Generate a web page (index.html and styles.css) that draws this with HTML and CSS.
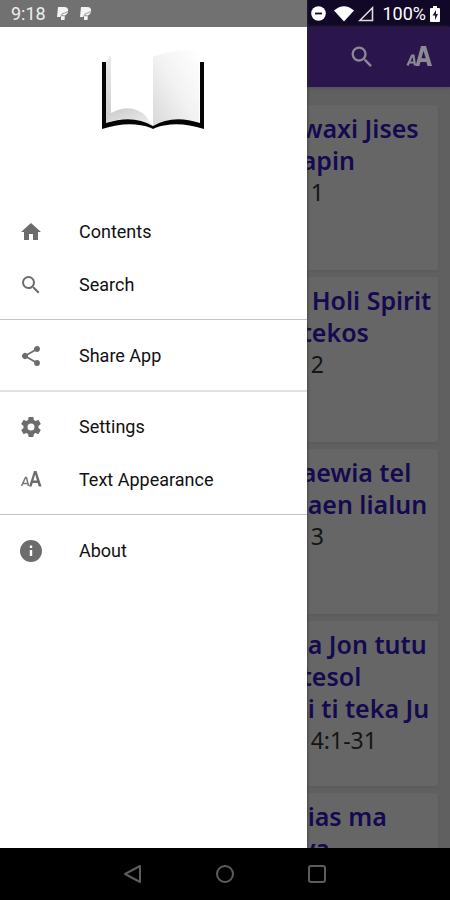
FILE: index.html
```html
<!DOCTYPE html>
<html lang="en">
<head>
<meta charset="utf-8">
<meta name="viewport" content="width=device-width, initial-scale=1">
<title>Contents</title>
<link rel="stylesheet" href="styles.css">
</head>
<body>
<div class="screen">
  <header class="status">
    <div class="status-left">
      <span>9:18</span>
      <svg width="13" height="15" viewBox="0 0 13 15"><path d="M2 1h6q5 0 4 5-1 3-3 3.500L8.500 14H5v-3H1z" fill="#f4f4f4"/><path d="M4.500 11q1-4 4-4 2.500 0 3-2M6 9.500l3 .5" stroke="#999" fill="none"/></svg>
      <svg width="13" height="15" viewBox="0 0 13 15"><path d="M2 1h6q5 0 4 5-1 3-3 3.500L8.500 14H5v-3H1z" fill="#f4f4f4"/><path d="M4.500 11q1-4 4-4 2.500 0 3-2M6 9.500l3 .5" stroke="#999" fill="none"/></svg>
    </div>
    <div class="status-right">
      <svg width="15" height="15" viewBox="0 0 15 15"><circle cx="7.500" cy="7.500" r="7.300" fill="#fff"/><path d="M4 7.500h7" stroke="#100826" stroke-width="1.800"/></svg>
      <svg class="wifi" width="20" height="16" viewBox="0 0 20 16"><path d="M0 4.500Q10-4 20 4.500L10 15.500z" fill="#fff"/></svg>
      <svg width="16" height="16" viewBox="0 0 16 16"><path d="M14.500 1.800v12.700H1.800z" fill="none" stroke="#ddd" stroke-width="1.600"/></svg>
      <span class="battery">100%</span>
      <svg width="10" height="16" viewBox="0 0 10 16"><path d="M3 0h4v2h2q1 0 1 1v12q0 1-1 1H1q-1 0-1-1V3q0-1 1-1h2z" fill="#fff"/><path d="M6 4 2.500 9.500H5V14l3-6H6z" fill="#201838"/></svg>
    </div>
  </header>

  <main class="page">
    <div class="appbar">
      <button aria-label="Search"><svg width="28" height="28" viewBox="0 0 24 24"><path d="M15.500 14h-.790l-.280-.270A6.470 6.470 0 0 0 16 9.500 6.500 6.500 0 1 0 9.500 16c1.610 0 3.090-.590 4.230-1.570l.270.280v.790l5 4.990L20.490 19zM9.500 14A4.500 4.500 0 1 1 9.500 5a4.500 4.500 0 0 1 0 9z"/></svg></button>
      <button aria-label="Text Appearance"><svg width="26" height="22" viewBox="0 0 26 22"><path d="M1.500 19.500 6 9.500h1.500L9 19.500M3 16.500h5.500" fill="none" stroke="#8c8894" stroke-width="2.200"/><path d="M9.500 20 15 0h5l6 20h-4.500L20.500 16h-6l-1.200 4zM15.500 12.300h4.200L17.500 5z"/></svg></button>
    </div>
    <div class="cards">
      <article class="card"><h2><span>waxi Jises</span><span>apin</span></h2><p>1</p></article>
      <article class="card"><h2><span class="next">Holi Spirit</span><span>tekos</span></h2><p>2</p></article>
      <article class="card"><h2><span>aewia tel</span><span class="word">aen lialun</span></h2><p>3</p></article>
      <article class="card"><h2><span class="word">a Jon tutu</span><span>tesol</span><span class="word">i ti teka Ju</span></h2><p>4:1-31</p></article>
      <article class="card"><h2><span class="word">ias ma</span><span>va</span></h2></article>
    </div>
  </main>

  <aside class="drawer">
    <div class="cover">
      <svg width="104" height="80" viewBox="0 0 104 80">
        <defs>
          <linearGradient id="right" x1="0" y1="1" x2="1" y2="0"><stop offset="0" stop-color="#d8d8d8"/><stop offset=".5" stop-color="#f2f2f2"/><stop offset="1" stop-color="#fff"/></linearGradient>
          <linearGradient id="curl" x1="0" y1="0" x2="1" y2="1"><stop offset="0" stop-color="#c8c8c8"/><stop offset="1" stop-color="#f2f2f2"/></linearGradient>
          <linearGradient id="edge" x1="0" y1="0" x2="0" y2="1"><stop offset="0" stop-color="#ececec"/><stop offset="1" stop-color="#ccc"/></linearGradient>
        </defs>
        <path d="M5 11 10 5v60l-5 8z" fill="url(#edge)"/>
        <path d="M5 73 10 63Q30 52 45 66L52 77Q28 64 5 73z" fill="url(#curl)"/>
        <path d="M52 7Q73-2 98 1V73Q73 67 52 76z" fill="url(#right)"/>
        <path d="M1 12h4v61q27-9 47 3 20-12 47-3V12h4v67q-28-9-49-1l-2 1-2-1Q29 70 1 79z" fill="#050505"/>
      </svg>
    </div>
    <nav>
      <ul>
        <li><a href="#contents"><svg viewBox="0 0 24 24"><path d="M10 20v-6h4v6h5v-8h3L12 3 2 12h3v8z"/></svg>Contents</a></li>
        <li><a href="#search"><svg viewBox="0 0 24 24"><path d="M15.500 14h-.790l-.280-.270A6.470 6.470 0 0 0 16 9.500 6.500 6.500 0 1 0 9.500 16c1.610 0 3.090-.590 4.230-1.570l.270.280v.790l5 4.990L20.490 19zM9.500 14A4.500 4.500 0 1 1 9.500 5a4.500 4.500 0 0 1 0 9z"/></svg>Search</a></li>
      </ul>
      <ul>
        <li><a href="#share"><svg viewBox="0 0 24 24"><path d="M18 16.080c-.760 0-1.440.300-1.960.770L8.910 12.700c.050-.230.090-.460.090-.700s-.040-.470-.090-.700l7.050-4.110A2.990 2.990 0 1 0 15 5c0 .240.040.470.090.700L8.040 9.810A2.990 2.990 0 1 0 8.040 14.190l7.120 4.160c-.050.210-.080.430-.080.650A2.920 2.920 0 1 0 18 16.080z"/></svg>Share App</a></li>
      </ul>
      <ul class="settings">
        <li><a href="#settings"><svg viewBox="0 0 24 24"><path d="M19.430 12.980c.040-.320.070-.640.070-.980s-.030-.660-.070-.980l2.110-1.650c.190-.150.240-.420.120-.640l-2-3.460c-.120-.220-.390-.300-.610-.220l-2.490 1c-.520-.400-1.080-.730-1.690-.980l-.380-2.650A.488.488 0 0 0 14 2h-4c-.250 0-.460.180-.490.420l-.380 2.650c-.610.250-1.170.590-1.690.980l-2.490-1c-.230-.090-.490 0-.610.220l-2 3.460c-.130.220-.070.490.120.640l2.110 1.650c-.040.320-.070.650-.070.980s.030.660.070.980l-2.110 1.650c-.190.150-.240.420-.120.640l2 3.460c.120.220.390.300.610.220l2.490-1c.520.400 1.080.730 1.690.980l.380 2.650c.030.240.240.420.490.420h4c.250 0 .460-.180.490-.420l.380-2.650c.610-.250 1.170-.590 1.690-.980l2.490 1c.230.090.490 0 .610-.220l2-3.460c.120-.220.070-.490-.120-.640zM12 15.500a3.500 3.500 0 1 1 0-7 3.500 3.500 0 0 1 0 7z"/></svg>Settings</a></li>
        <li><a href="#appearance"><svg viewBox="0 0 24 24"><path d="M2.500 18 6.500 9.500h1L9.500 18M4 15.500h4.500" fill="none" stroke="#777" stroke-width="1.500"/><path d="M10 18.500 15 3h2.500l5 15.500h-2.800L18.700 15h-5l-1.100 3.500zM14.400 12.600H18L16.200 6.500z"/></svg>Text Appearance</a></li>
      </ul>
      <ul>
        <li><a href="#about"><svg viewBox="0 0 24 24"><path d="M12 1a11 11 0 1 0 0 22 11 11 0 0 0 0-22zm1.200 16h-2.400v-6h2.400zm0-8h-2.400V6.600h2.400z"/></svg>About</a></li>
      </ul>
    </nav>
  </aside>
</div>
<footer class="navbar">
  <button aria-label="Back"><svg width="20" height="20" viewBox="0 0 20 20"><path d="M17 2v16L2 10z"/></svg></button>
  <button aria-label="Home"><svg width="20" height="20" viewBox="0 0 20 20"><circle cx="10" cy="10" r="8"/></svg></button>
  <button aria-label="Recent apps"><svg width="20" height="20" viewBox="0 0 20 20"><rect x="2" y="2" width="16" height="16" rx="2"/></svg></button>
</footer>
</body>
</html>
```
FILE: styles.css
```css
* { box-sizing: border-box; }

body {
  margin: 0;
  height: 100vh;
  display: flex;
  flex-direction: column;
  background: #000;
  font-family: Roboto, "Liberation Sans", sans-serif;
}

button {
  border: 0;
  padding: 0;
  background: none;
  display: flex;
}

svg { flex: none; }

.screen {
  position: relative;
  flex: 1;
  min-height: 0;
  overflow: hidden;
}

/* status bar, over both the page and the drawer */
.status {
  position: absolute;
  inset: 0 0 auto;
  z-index: 2;
  height: 27px;
  padding: 0 10px 0 11px;
  display: flex;
  align-items: center;
  justify-content: space-between;
  color: #fff;
  font-size: 18px;
}

.status-left,
.status-right {
  display: flex;
  align-items: center;
}

.status-left { gap: 10px; color: #eee; }
.status-right { gap: 4px; }
.wifi { margin-left: 4px; }
.battery { margin-left: 4px; }

/* dimmed page */
.page {
  height: 100%;
  border-top: 27px solid #100826;
  background: #606060;
}

.appbar {
  height: 60px;
  padding: 0 18px;
  display: flex;
  align-items: center;
  justify-content: flex-end;
  gap: 30px;
  background: #2a164c;
  box-shadow: 0 1px 4px #505054;
  fill: #8c8894;
}

.cards {
  padding: 18px 12px 0;
  display: grid;
  gap: 7px;
}

.card {
  height: 165px;
  padding: 7px 0 0 68%;
  background: #666;
  border-radius: 2px;
  box-shadow: 0 1px 2px #5a5a5a;
  white-space: nowrap;
}

.card h2,
.card p {
  margin: 0;
  font-family: "Noto Sans", sans-serif;
  font-size: 25px;
  line-height: 32px;
}

.card h2 {
  color: #150a50;
  font-weight: 600;
}

.card h2 span { display: block; }
.card .word { padding-left: 6px; }
.card .next { padding-left: 10px; }

.card p {
  padding-left: 9px;
  color: #151515;
  font-size: 23px;
}

/* drawer */
.drawer {
  position: absolute;
  inset: 0 auto 0 0;
  width: 68.200%;
  border-top: 27px solid #717171;
  background: #fff;
  box-shadow: 0 0 3px #333;
}

.cover {
  height: 178px;
  padding-top: 23px;
  text-align: center;
}

.drawer ul {
  margin: 0;
  padding: 9px 0 8px;
  list-style: none;
  border-top: 1px solid #c4c4c4;
}

.drawer ul:first-child {
  padding-top: 0;
  border-top: 0;
}

.drawer .settings {
  padding-top: 8px;
  border-top: 2px solid #e2e2e2;
}

.drawer a {
  height: 53px;
  padding-left: 19px;
  display: flex;
  align-items: center;
  gap: 36px;
  color: #111;
  font-size: 18px;
  text-decoration: none;
}

.drawer a svg {
  width: 24px;
  height: 24px;
  fill: #6c6c6c;
}

/* system navigation */
.navbar {
  height: 52px;
  padding: 0 20%;
  display: flex;
  align-items: center;
  justify-content: center;
  gap: 72px;
}

.navbar svg {
  fill: none;
  stroke: #5c5c5c;
  stroke-width: 2;
  stroke-linejoin: round;
}
```
